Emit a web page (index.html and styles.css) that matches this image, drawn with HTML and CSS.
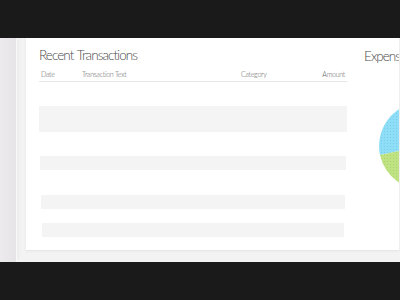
FILE: index.html
```html
<!DOCTYPE html>
<html lang="en">
<head>
  <meta charset="UTF-8">
  <meta name="viewport" content="width=device-width, initial-scale=1.0">
  <title>Recent Transactions</title>
  <link rel="stylesheet" href="styles.css">
</head>
<body>
  <div class="letterbox"></div>

  <div class="stage">
    <div class="rail"></div>
    <div class="card">
      <div class="transactions">
        <h2 class="panel-title">Recent Transactions</h2>
        <div class="table-head">
          <span class="col-date">Date</span>
          <span class="col-text">Transaction Text</span>
          <span class="col-cat">Category</span>
          <span class="col-amount">Amount</span>
        </div>
        <div class="row row-tall"></div>
        <div class="row row-2"></div>
        <div class="row row-3"></div>
        <div class="row row-4"></div>
      </div>

      <div class="expenses">
        <h2 class="panel-title">Expenses</h2>
        <svg class="pie" width="90" height="90" viewBox="0 0 90 90">
          <defs>
            <pattern id="dotsBlue" width="3" height="3" patternUnits="userSpaceOnUse">
              <rect width="3" height="3" fill="#8fdef7"/>
              <rect width="1" height="1" fill="#7ccbe8"/>
            </pattern>
            <pattern id="dotsGreen" width="3" height="3" patternUnits="userSpaceOnUse">
              <rect width="3" height="3" fill="#bfe283"/>
              <rect width="1" height="1" fill="#aed46f"/>
            </pattern>
          </defs>
          <path d="M45 45 L2 54 A44 44 0 0 1 45 1 A44 44 0 0 1 89 45 Z" fill="url(#dotsBlue)"/>
          <path d="M45 45 L89 45 A44 44 0 0 1 2 54 Z" fill="url(#dotsGreen)"/>
        </svg>
      </div>
    </div>
  </div>

  <div class="letterbox"></div>
</body>
</html>
```

FILE: styles.css
```css
body, html {
  margin: 0;
  padding: 0;
  background-color: #1a1a1a;
  font-family: Lato, 'Open Sans', sans-serif;
  overflow: hidden;
}
.letterbox {
  height: 38px;
  background-color: #1a1a1a;
}
.stage {
  height: 224px;
  display: flex;
  background-color: #f3f3f3;
  overflow: hidden;
}
.rail {
  width: 16px;
  flex-shrink: 0;
  background: linear-gradient(to right, #eceaec, #e6e4e6);
  border-right: 1px solid #f8f8f8;
  margin-right: 9px;
  box-shadow: 4px 0 3px -2px #ececec;
}
.card {
  width: 373px;
  flex-shrink: 0;
  height: 212px;
  background-color: #fff;
  box-shadow: 0 1px 2px #e2e2e2;
  display: flex;
  padding: 9px 0 0 13px;
  box-sizing: border-box;
  overflow: hidden;
}
.transactions {
  width: 308px;
  flex-shrink: 0;
}
.panel-title {
  margin: 0;
  font-size: 13.5px;
  line-height: 16px;
  font-weight: 300;
  color: #4a4a4a;
  letter-spacing: -0.95px;
  word-spacing: 1px;
  white-space: nowrap;
}
.table-head {
  display: flex;
  margin-top: 7px;
  padding: 0 2px 2px;
  border-bottom: 1px solid #e6e6e6;
  font-size: 7px;
  line-height: 9px;
  font-weight: 300;
  letter-spacing: -0.25px;
  color: #5e5e5e;
}
.col-date { width: 41px; }
.col-text { width: 159px; }
.col-cat { width: 60px; }
.col-amount { flex: 1; text-align: right; }
.row {
  background-color: #f4f4f4;
  height: 14px;
}
.row-tall {
  height: 26px;
  margin-top: 24px;
}
.row-2 { margin-top: 24px; margin-left: 1px; margin-right: 1px; }
.row-3 { margin-top: 25px; margin-left: 2px; margin-right: 2px; }
.row-4 { margin-top: 14px; margin-left: 3px; margin-right: 3px; }
.expenses {
  margin-left: 17px;
  padding-top: 1px;
}
.pie {
  display: block;
  margin-top: 37px;
  margin-left: 14px;
}
```
